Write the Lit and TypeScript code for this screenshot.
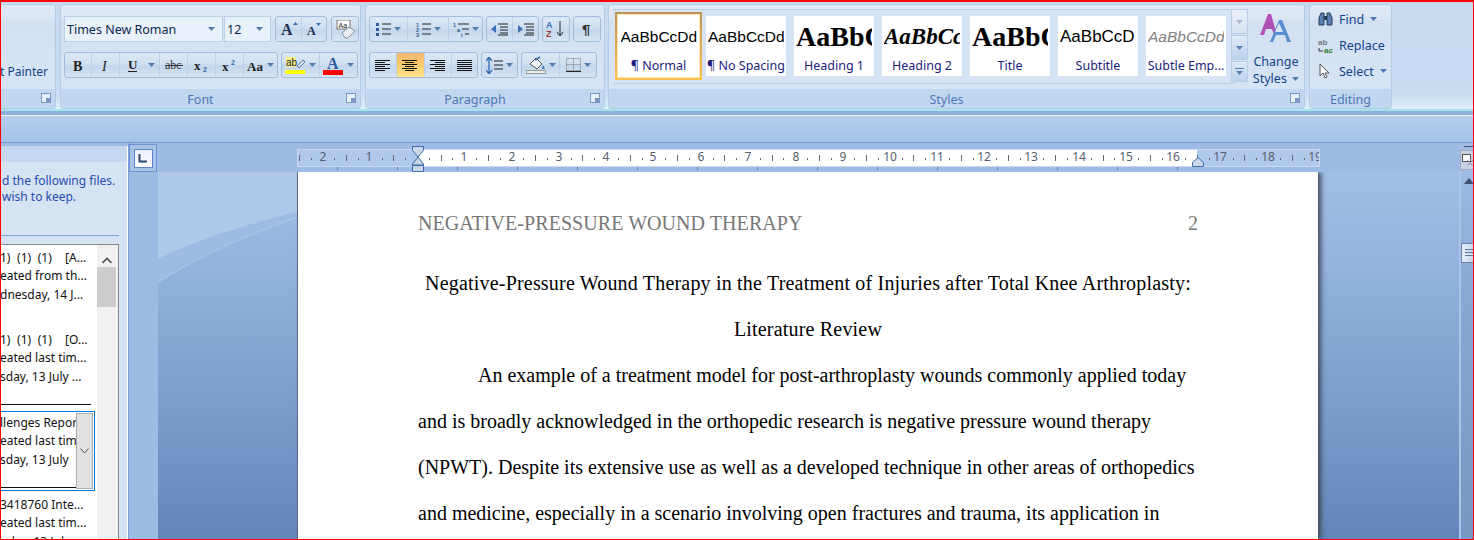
import { LitElement, html, css, svg } from "lit";
import { customElement } from "lit/decorators.js";

const arrow = (c = "#567db1") => html`<svg class="dd" width="7" height="4" viewBox="0 0 7 4"><path d="M0 0h7L3.5 4z" fill="${c}"/></svg>`;
const i = (w: number, h: number, body: unknown) => html`<svg width="${w}" height="${h}" viewBox="0 0 ${w} ${h}">${body}</svg>`;
const lines = (rows: [number, number][], c = "#111") => rows.map(([x, w], n) => svg`<rect x="${x}" y="${n * 2 + 1}" width="${w}" height="1" fill="${c}"/>`);

const rulerNums: [string, number][] = [["2", 323], ["1", 369], ["1", 464], ["2", 512], ["3", 559], ["4", 606], ["5", 653], ["6", 701], ["7", 748], ["8", 796], ["9", 843], ["10", 890], ["11", 937], ["12", 984], ["13", 1031], ["14", 1079], ["15", 1126], ["16", 1173], ["17", 1220], ["18", 1268], ["19", 1315]];

@customElement("app-root")
export class AppRoot extends LitElement {
  static styles = css`
    :host { display: block; width: 1474px; height: 540px; position: relative; overflow: hidden; background: #bfd4ee; font-family: "Noto Sans", sans-serif; color: #15428b; }
    .frame { position: absolute; inset: 0; border: solid #f00; border-width: 2px 1px 1px 1px; pointer-events: none; z-index: 9; }
    .ribbon { height: 111px; box-sizing: border-box; padding-top: 4px; display: flex; background: linear-gradient(#c9daf0 0, #c6d9f0 70%, #cbe0f3 90%, #e0f1fb 100%); border-bottom: 2px solid #a9e3ec; }
    .group { height: 105px; box-sizing: border-box; border: 1px solid #b5cbe6; border-radius: 3px; background: linear-gradient(#e0e9f5 0, #dae5f4 14%, #d2e0f2 15%, #d6e4f4 84%); display: flex; flex-direction: column; margin-right: 3px; flex: none; position: relative; }
    .body { height: 84px; box-sizing: border-box; position: relative; }
    .cap { height: 19px; background: #c1d7ef; display: flex; align-items: center; justify-content: center; font-size: 12.5px; color: #4f76b5; position: relative; border-radius: 0 0 3px 3px; box-sizing: border-box; padding: 2px 20px 0 0; }
    .cap.plain { padding-right: 0; }
    .launch { position: absolute; right: 4px; top: 4px; width: 8px; height: 8px; border: 1px solid #7a98c0; background: #e6eef8; }
    .launch::after { content: ""; position: absolute; right: 0; bottom: 0; width: 4px; height: 4px; background: #7a98c0; }
    .clip { width: 57px; margin-left: -1px; border-left: 0; }
    .painter { position: absolute; right: 7px; top: 58px; font-size: 12px; white-space: nowrap; }
    .font { width: 301px; margin-left: 1px; }
    .para { width: 240px; margin-left: 1px; }
    .styles { width: 697px; margin-left: 0; }
    .edit { width: 83px; margin-left: 1px; }
    .row { position: absolute; display: flex; gap: 3px; height: 26px; }
    .btns { display: flex; height: 100%; box-sizing: border-box; border: 1px solid #a3bddd; border-radius: 3px; background: linear-gradient(#dde8f5 0, #cfdff1 45%, #c3d6ec 55%, #d6e4f3 100%); }
    .btn { display: flex; align-items: center; justify-content: center; gap: 3px; border-right: 1px solid #bccfe7; box-sizing: border-box; }
    .btn:last-child { border-right: 0; }
    .btn.on { background: linear-gradient(#f8b877, #fbc766 40%, #fde28e); }
    .combo { height: 26px; box-sizing: border-box; background: #e8f0fa; border: 1px solid #bcd0e8; display: flex; align-items: center; justify-content: space-between; padding: 0 7px 0 2px; font-size: 12.5px; color: #10284f; }
    .row.r1 { top: 11px; } .row.r2 { top: 47px; }
    .gallery { position: absolute; left: 4px; top: 4px; width: 622px; height: 75px; background: #d5e3f4; border: 1px solid #b9cde6; border-left: 0; display: flex; gap: 8px; padding: 6px 0 0 5px; box-sizing: border-box; }
    .style { width: 80px; height: 60px; background: #fff; flex: none; display: flex; flex-direction: column; align-items: center; overflow: hidden; box-sizing: border-box; }
    .style.sel { width: 87px; height: 68px; margin: -4px -4px 0 -3px; border: 2px solid #f2b04f; border-image: linear-gradient(#c0935a, #fcc24e) 1; box-shadow: inset 0 0 0 1px #fbe7b4; }
    .sample { height: 36px; line-height: 36px; white-space: nowrap; width: 76px; overflow: hidden; text-align: center; color: #000; margin-top: 3px; flex: none; }
    .sel .sample { margin-top: 5px; }
    .label { font-size: 12.5px; color: #1c1c7c; white-space: nowrap; margin-top: 2px; }
    .sans { font: 15.5px/36px "Liberation Sans", sans-serif; }
    .h1 { font: bold 28px/36px "Liberation Serif", serif; text-align: left; }
    .h2 { font: italic bold 23px/36px "Liberation Serif", serif; text-align: left; }
    .scroll { position: absolute; left: 622px; top: 4px; width: 17px; display: flex; flex-direction: column; gap: 1px; }
    .scroll div { height: 24px; border: 1px solid #b9cde6; box-sizing: border-box; background: linear-gradient(#dfe9f6, #bcd2ee); display: flex; align-items: center; justify-content: center; }
    .scroll .up { background: linear-gradient(#e8eff8, #d8e3f1); }
    .change { position: absolute; left: 642px; top: 8px; width: 50px; text-align: center; font-size: 12.5px; line-height: 17px; }
    .change svg { display: block; margin: 0 auto 10px; }
    .change .dd { display: inline; margin: 0 0 2px 2px; }
    .edit-row { position: absolute; left: 8px; display: flex; align-items: center; gap: 6px; font-size: 12.5px; height: 20px; white-space: nowrap; }
    .band { height: 32px; box-sizing: border-box; border-bottom: 1px solid #7796c9; background: linear-gradient(#8fb0dc 0, #8fb0dc 4px, #edf4fc 4px, #edf4fc 5px, #b6cdec 5px, #a6c2e7); }
    .work { height: 397px; display: flex; position: relative; background: #9ebce4; }
    .pane { width: 128px; flex: none; background: #d5e3f3; border-right: 1px solid #fff; margin-top: 3px; position: relative; box-sizing: border-box; }
    .pane-head { height: 16px; background: #c4d7ef; }
    .note { position: absolute; left: 2px; top: 27px; font-size: 12px; line-height: 16px; color: #2a4cb0; white-space: nowrap; }
    .note span { display: block; }
    .rule { position: absolute; left: 0; top: 89px; width: 119px; height: 1px; background: #7ea4dd; }
    .list { position: absolute; left: 0; top: 98px; width: 119px; height: 296px; box-sizing: border-box; background: #fff; border: 1px solid #888; border-left: 0; border-bottom: 0; overflow: hidden; font-size: 12px; color: #111; }
    .entry { position: absolute; left: 0; width: 96px; height: 55px; line-height: 18.3px; white-space: pre; overflow: hidden; }
    .entry div { display: block; }
    .wide { word-spacing: 3.5px; }
    .sb { position: absolute; right: 0; top: 0; bottom: 0; width: 21px; background: #f0f0f0; }
    .thumb { position: absolute; top: 22px; left: 0; width: 19px; height: 40px; background: #cdcdcd; }
    .sep { position: absolute; left: 0; width: 91px; height: 1px; background: #111; }
    .focus { position: absolute; left: 0; top: 166px; width: 95px; height: 80px; box-sizing: border-box; border: 1px solid #0078d7; border-left: 0; overflow: hidden; }
    .focus .entry { top: 2px; width: 76px; }
    .focus .bar { position: absolute; right: 1px; top: 1px; bottom: 1px; width: 17px; background: #e1e1e1; border: 1px solid #adadad; box-sizing: border-box; display: flex; align-items: center; justify-content: center; }
    .focus .line { position: absolute; left: 0; bottom: 2px; width: 76px; height: 1px; background: #111; }
    .tabcol { width: 29px; flex: none; background: #9dbbe3; border-left: 1px solid #7d9fd4; position: relative; }
    .tab { position: absolute; left: 0; top: 1px; width: 28px; height: 28px; border: 1px solid #6d92d6; box-sizing: border-box; display: flex; align-items: center; justify-content: center; background: #a9c3e7; }
    .tab div { width: 19px; height: 19px; border: 1px solid #5e86d0; box-sizing: border-box; background: linear-gradient(#e8eefa, #fff); display: flex; align-items: center; justify-content: center; }
    .stage { flex: 1; min-width: 0; position: relative; background: linear-gradient(#a2bfe6 29px, #92b1dd 130px, #7c9dcd 260px, #6385b9 397px); overflow: hidden; }
    .rbar { height: 29px; background: #9dbbe3; position: relative; z-index: 2; }
    .ruler { position: absolute; left: 139px; top: 6px; width: 1023px; height: 18px; box-sizing: border-box; border: 1px solid #c7d8ef; background: #b0c9ea; overflow: hidden; font-size: 12px; color: #56606e; }
    .ruler .white { position: absolute; left: 120px; right: 122px; top: 0; bottom: 0; background: #fff; }
    .ruler span { position: absolute; top: -1px; transform: translateX(-50%); line-height: 16px; z-index: 1; }
    .marks { position: absolute; left: 0; top: 0; z-index: 1; }
    .tabstops { position: absolute; left: 0; top: 24px; }
    .ind { position: absolute; z-index: 3; }
    .swoosh { position: absolute; left: 0; top: 29px; }
    .page { position: absolute; left: 140px; top: 29px; width: 1020px; height: 368px; background: #fff; box-shadow: 3px 0 5px #3f4a5e, -1px 0 0 #5d6d88; font-family: "Liberation Serif", serif; color: #000; font-size: 20px; }
    .header { position: absolute; left: 120px; right: 120px; top: 40px; display: flex; justify-content: space-between; color: #777; line-height: 22px; letter-spacing: .06px; }
    .header b { font-weight: normal; }
    .text { position: absolute; left: 120px; top: 88px; width: 780px; }
    .ln { height: 46px; line-height: 46px; white-space: nowrap; }
    .ctr { text-align: center; letter-spacing: .19px; }
    .indent { padding-left: 60px; }
    .vs { width: 15px; flex: none; background: linear-gradient(#9dbbe3 29px, #8aa9d6 130px, #7796c4); position: relative; margin-left: -1px; border-left: 2px solid #a9c4e8; box-sizing: border-box; }
    .vs .dash { position: absolute; left: 3px; top: 3px; width: 10px; height: 1px; background: #3f4f72; }
    .vs .top { position: absolute; left: -1px; top: 7px; width: 15px; height: 20px; border: 1px solid #a3adbf; box-sizing: border-box; background: #c6d2e4; display: flex; align-items: center; justify-content: center; }
    .vs .up { position: absolute; left: 3px; top: 35px; width: 0; height: 0; border: 5px solid transparent; border-top: 0; border-bottom: 6px solid #3f4f72; }
    .vs .th { position: absolute; left: 0; top: 100px; width: 14px; height: 20px; border: 1px solid #6b82a8; box-sizing: border-box; background: linear-gradient(90deg, #e7eef8, #c3d4ea); }
    .vs .th::after { content: ""; position: absolute; left: 3px; top: 5px; width: 8px; height: 7px; background: repeating-linear-gradient(#61779b 0 1px, transparent 1px 3px); }
  `;

  private fontGroup() {
    return html`<div class="group font"><div class="body">
      <div class="row r1" style="left:3px;gap:1px">
        <div class="combo" style="width:159px">Times New Roman ${arrow()}</div>
        <div class="combo" style="width:47px">12 ${arrow()}</div>
        <div class="btns" style="margin-left:3px;width:52px">
          <div class="btn" style="width:27px">${i(18, 14, svg`<text x="1" y="13" font-family="Liberation Serif" font-weight="bold" font-size="16" fill="#1f2f4f">A</text><path d="M13 3h5l-2.5-3z" fill="#3a6bb0"/>`)}</div>
          <div class="btn" style="width:24px">${i(16, 14, svg`<text x="1" y="13" font-family="Liberation Serif" font-weight="bold" font-size="12" fill="#1f2f4f">A</text><path d="M10 1h5l-2.5 3z" fill="#3a6bb0"/>`)}</div>
        </div>
        <div class="btns" style="margin-left:3px;width:28px"><div class="btn" style="width:26px">${i(21, 19, svg`<rect x="2" y="0" width="13" height="9" fill="#fff" stroke="#777"/><text x="3.5" y="7.5" font-size="7" font-family="Liberation Sans" fill="#222">Aa</text><path d="M7 13l7-6 6 4-7 7h-3z" fill="#e9edf3" stroke="#8a8f99"/>`)}</div></div>
      </div>
      <div class="row r2" style="left:3px;gap:3px">
        <div class="btns" style="width:214px">
          <div class="btn" style="width:27px">${i(12, 13, svg`<text x="1" y="12" font-family="Liberation Serif" font-weight="bold" font-size="14" fill="#222">B</text>`)}</div>
          <div class="btn" style="width:28px">${i(12, 13, svg`<text x="2" y="12" font-family="Liberation Serif" font-style="italic" font-size="14" fill="#222">I</text>`)}</div>
          <div class="btn" style="width:40px;padding-left:3px">${i(12, 15, svg`<text x="1" y="11" font-family="Liberation Serif" font-weight="bold" font-size="13" fill="#222">U</text><rect x="1" y="13" width="9" height="1" fill="#222"/>`)}<span style="width:3px"></span>${arrow()}</div>
          <div class="btn" style="width:28px">${i(18, 12, svg`<text x="0" y="10" font-family="Liberation Serif" font-size="12" fill="#333">abc</text><rect x="0" y="6" width="18" height="1" fill="#333"/>`)}</div>
          <div class="btn" style="width:28px">${i(15, 13, svg`<text x="0" y="11" font-family="Liberation Serif" font-weight="bold" font-size="13" fill="#222">x</text><text x="9" y="13" font-family="Liberation Sans" font-weight="bold" font-size="7" fill="#3a6bb0">2</text>`)}</div>
          <div class="btn" style="width:28px">${i(15, 13, svg`<text x="0" y="12" font-family="Liberation Serif" font-weight="bold" font-size="13" fill="#222">x</text><text x="9" y="6" font-family="Liberation Sans" font-weight="bold" font-size="7" fill="#3a6bb0">2</text>`)}</div>
          <div class="btn" style="width:33px">${i(17, 13, svg`<text x="0" y="12" font-family="Liberation Serif" font-weight="bold" font-size="13" fill="#222">Aa</text>`)}${arrow()}</div>
        </div>
        <div class="btns" style="width:77px">
          <div class="btn" style="width:38px">${i(21, 18, svg`<rect x="1" y="1" width="10" height="10" fill="#f7f08b"/><text x="1" y="10" font-family="Liberation Sans" font-size="10" fill="#222">ab</text><path d="M12 10l6-6 2 2-6 6z" fill="none" stroke="#6a7f9c"/><rect x="0" y="14" width="20" height="4" fill="#ff0"/>`)}${arrow()}</div>
          <div class="btn" style="width:37px">${i(21, 19, svg`<text x="4" y="13" font-family="Liberation Serif" font-weight="bold" font-size="16" fill="#2e5aa0">A</text><rect x="0" y="14" width="20" height="5" fill="#f00"/>`)}${arrow()}</div>
        </div>
      </div>
    </div><div class="cap">Font<i class="launch"></i></div></div>`;
  }

  private paraGroup() {
    const align = (rows: [number, number][]) => i(16, 12, lines(rows));
    const dots = svg`<rect x="0" y="1" width="3" height="3" fill="#345b95"/><rect x="0" y="6" width="3" height="3" fill="#345b95"/><rect x="0" y="11" width="3" height="3" fill="#345b95"/><path d="M6 2h9M6 7h9M6 12h9" stroke="#222"/>`;
    const nums = svg`<text font-size="5.5" font-family="Liberation Sans" font-weight="bold" fill="#345b95"><tspan x="0" y="5">1</tspan><tspan x="0" y="10">2</tspan><tspan x="0" y="15">3</tspan></text><path d="M6 2h9M6 7h9M6 12h9" stroke="#222"/>`;
    const multi = svg`<text font-size="5.5" font-family="Liberation Sans" font-weight="bold" fill="#345b95"><tspan x="0" y="5">1</tspan><tspan x="4" y="10">a</tspan><tspan x="8" y="15">i</tspan></text><path d="M5 2h11M9 7h7M12 12h4" stroke="#222"/>`;
    return html`<div class="group para"><div class="body">
      <div class="row r1" style="left:3px">
        <div class="btns" style="width:114px">
          <div class="btn" style="width:38px">${i(15, 15, dots)}${arrow()}</div>
          <div class="btn" style="width:41px">${i(15, 15, nums)}${arrow()}</div>
          <div class="btn" style="width:33px">${i(16, 15, multi)}${arrow()}</div>
        </div>
        <div class="btns" style="width:53px">
          <div class="btn" style="width:26px">${i(18, 13, svg`<path d="M0 6l5-4v8z" fill="#3d6fb5"/><path d="M7 1h10M9 4h8M9 7h8M9 10h8M7 12h10" stroke="#222"/>`)}</div>
          <div class="btn" style="width:25px">${i(18, 13, svg`<path d="M6 6l-5-4v8z" fill="#3d6fb5"/><path d="M7 1h10M9 4h8M9 7h8M9 10h8M7 12h10" stroke="#222"/>`)}</div>
        </div>
        <div class="btns" style="width:28px"><div class="btn" style="width:26px">${i(20, 18, svg`<text font-size="9" font-family="Liberation Sans" font-weight="bold"><tspan x="0" y="8" fill="#3d6fb5">A</tspan><tspan x="0" y="17" fill="#9c3a3a">Z</tspan></text><path d="M14 1v14M11 12l3 4 3-4" fill="none" stroke="#222"/>`)}</div></div>
        <div class="btns" style="width:28px"><div class="btn" style="width:26px">${i(12, 14, svg`<text x="1" y="13" font-size="15" font-family="Liberation Sans" font-weight="bold" fill="#333">¶</text>`)}</div></div>
      </div>
      <div class="row r2" style="left:3px">
        <div class="btns" style="width:109px">
          <div class="btn" style="width:27px">${align([[0, 15], [0, 10], [0, 15], [0, 10], [0, 15], [0, 10]])}</div>
          <div class="btn on" style="width:28px">${align([[0, 15], [3, 9], [0, 15], [3, 9], [0, 15], [3, 9]])}</div>
          <div class="btn" style="width:28px">${align([[0, 15], [5, 10], [0, 15], [5, 10], [0, 15], [5, 10]])}</div>
          <div class="btn" style="width:25px">${align([[0, 15], [0, 15], [0, 15], [0, 15], [0, 15], [0, 15]])}</div>
        </div>
        <div class="btns" style="width:37px"><div class="btn" style="width:35px">${i(17, 17, svg`<path d="M3 1v15M0 4l3-4 3 4M0 13l3 4 3-4" fill="none" stroke="#3d6fb5" stroke-width="1.4"/><path d="M8 4h9M8 8h9M8 12h9" stroke="#222"/>`)}${arrow()}</div></div>
        <div class="btns" style="width:76px">
          <div class="btn" style="width:38px">${i(20, 18, svg`<path d="M4 8l6-6 6 6-5 5z" fill="#eef1f6" stroke="#555"/><path d="M9 4l5-3" stroke="#3d6fb5" stroke-width="1.5"/><path d="M17 9l2 4h-3z" fill="#3d6fb5"/><rect x="0.5" y="14.5" width="19" height="3" fill="#eee" stroke="#999"/>`)}${arrow()}</div>
          <div class="btn" style="width:36px">${i(15, 15, svg`<path d="M.5 .5h14v12H.5zM7.5 .5v12M.5 6.5h14" fill="none" stroke="#777" stroke-dasharray="1 1"/><rect x="0" y="13" width="15" height="1" fill="#222"/>`)}${arrow()}</div>
        </div>
      </div>
    </div><div class="cap">Paragraph<i class="launch"></i></div></div>`;
  }

  private stylesGroup() {
    const items: [string, string, string, string][] = [
      ["AaBbCcDd", "¶ Normal", "sans", ""],
      ["AaBbCcDd", "¶ No Spacing", "sans", ""],
      ["AaBbC(", "Heading 1", "h1", ""],
      ["AaBbCc", "Heading 2", "h2", ""],
      ["AaBbC(", "Title", "h1", ""],
      ["AaBbCcD", "Subtitle", "sans", "font-size:17px;text-align:left"],
      ["AaBbCcDd", "Subtle Emp...", "sans", "font-style:italic;color:#808080"],
    ];
    return html`<div class="group styles"><div class="body">
      <div class="gallery">
        ${items.map(([s, l, c, st], n) => html`<div class="style ${n === 0 ? "sel" : ""}"><div class="sample ${c}" style="${st}">${s}</div><div class="label">${l}</div></div>`)}
      </div>
      <div class="scroll">
        <div class="up" style="height:25px">${arrow("#a9b8cc")}</div>
        <div style="height:25px">${arrow()}</div>
        <div style="height:21px">${i(9, 7, svg`<rect width="9" height="1" fill="#567db1"/><path d="M1 3h7L4.5 7z" fill="#567db1"/>`)}</div>
      </div>
      <div class="change">
        ${i(32, 30, svg`<path d="M0 22L8 1h3l6 21h-3l-2-6H6l-2 6z" fill="#b04fb5"/><path d="M10 29L19 7h3l9 22h-4l-2-7h-9l-3 7z" fill="#5b8ed0"/><path d="M15 19h8l-4-9z" fill="#dbe6f4"/>`)}
        Change<br />Styles ${arrow()}
      </div>
    </div><div class="cap">Styles<i class="launch"></i></div></div>`;
  }

  private editGroup() {
    return html`<div class="group edit"><div class="body">
      <div class="edit-row" style="top:4px">${i(15, 14, svg`<path d="M1 13V6l2-5h3v12zM9 13V1h3l2 5v7z" fill="#5a7fb0" stroke="#263c5e"/><rect x="6" y="4" width="3" height="4" fill="#263c5e"/>`)}Find ${arrow("#4f76b5")}</div>
      <div class="edit-row" style="top:30px">${i(15, 15, svg`<text font-size="8" font-family="Liberation Sans" font-weight="bold"><tspan x="0" y="7" fill="#777">ab</tspan><tspan x="6" y="15" fill="#2f7d2f">ac</tspan></text><path d="M1 10v3h4" fill="none" stroke="#333"/>`)}Replace</div>
      <div class="edit-row" style="top:56px">${i(15, 16, svg`<path d="M2 1v12l3-3 2 5 2-1-2-4h4z" fill="#f4f6fa" stroke="#555"/>`)}Select ${arrow("#4f76b5")}</div>
    </div><div class="cap plain">Editing</div></div>`;
  }

  private ruler() {
    const origin = 119;
    const ticks: unknown[] = [];
    for (let n = -12; n <= 76; n++) {
      const x = Math.round(origin + n * 11.82);
      const k = ((n % 4) + 4) % 4;
      if (k === 2) ticks.push(svg`<rect x="${x}" y="5" width="1" height="6" fill="#667"/>`);
      else if (k !== 0) ticks.push(svg`<rect x="${x}" y="8" width="1" height="2" fill="#667"/>`);
    }
    const stops: unknown[] = [];
    for (let x = 179; x < 1040; x += 60) stops.push(svg`<rect x="${x}" y="0" width="1" height="3" fill="#6f86a8"/>`);
    return html`<div class="ruler"><div class="white"></div>
      <svg class="marks" width="1026" height="16">${ticks}</svg>
      ${rulerNums.map(([t, x]) => html`<span style="left:${x - 298}px">${t}</span>`)}
    </div>
    <svg class="tabstops" width="1100" height="4">${stops}</svg>
    <svg class="ind" style="left:254px;top:3px" width="12" height="26" viewBox="0 0 12 26">
      <path d="M.5 .5h11v4L6 11 .5 4.5zM6 11l5.5 7v1H.5v-1zM.5 19.5h11v6H.5z" fill="#c9d6e8" stroke="#3f6aa8"/>
    </svg>
    <svg class="ind" style="left:1034px;top:14px" width="12" height="10" viewBox="0 0 12 10">
      <path d="M.5 9.5v-4L6 .5l5.5 5v4z" fill="#c9d6e8" stroke="#3f6aa8"/>
    </svg>`;
  }

  private pane() {
    const e = (top: number, a: string, b: string, c: string) => html`<div class="entry" style="top:${top}px"><div class="wide">${a}</div><div>${b}</div><div>${c}</div></div>`;
    return html`<div class="pane">
      <div class="pane-head"></div>
      <div class="note"><span>d the following files.</span><span>wish to keep.</span></div>
      <div class="rule"></div>
      <div class="list">
        ${e(4, "1) (1) (1)  [A...", "eated from th...", "dnesday, 14 J...")}
        ${e(86, "1) (1) (1)  [O...", "eated last tim...", "sday, 13 July ...")}
        <div class="sep" style="top:159px"></div>
        <div class="focus">
          <div class="entry"><div>llenges Repor</div><div>eated last tim</div><div>sday, 13 July</div></div>
          <div class="line"></div>
          <div class="bar">${i(9, 6, svg`<path d="M.5 .5L4.5 5 8.5 .5" fill="none" stroke="#555"/>`)}</div>
        </div>
        <div class="entry" style="top:251px"><div>3418760 Inte...</div><div>eated last tim...</div><div>nday, 13 July</div></div>
        <div class="sb">
          <div style="padding:6px 0 0 5px">${i(10, 7, svg`<path d="M.5 6L5 1.5 9.5 6" fill="none" stroke="#555" stroke-width="1.6"/>`)}</div>
          <div class="thumb"></div>
        </div>
      </div>
    </div>`;
  }

  render() {
    return html`
      <div class="frame"></div>
      <div class="ribbon">
        <div class="group clip"><div class="body"><div class="painter">t Painter</div></div><div class="cap"><i class="launch"></i></div></div>
        ${this.fontGroup()}${this.paraGroup()}${this.stylesGroup()}${this.editGroup()}
      </div>
      <div class="band"></div>
      <div class="work">
        ${this.pane()}
        <div class="tabcol"><div class="tab"><div>${i(10, 9, svg`<path d="M1.5 0v7.5H9" fill="none" stroke="#2d4470" stroke-width="2"/>`)}</div></div></div>
        <div class="stage">
          <div class="rbar">${this.ruler()}</div>
          <svg class="swoosh" width="140" height="200" viewBox="0 0 140 200">
            <path d="M0 0h140v40C90 52 40 68 0 87z" fill="#afc8ea"/>
            <path d="M0 87C40 68 90 52 140 40v5C90 62 40 85 0 110z" fill="#9fbbe3"/>
            <path d="M0 110C40 85 90 62 140 45" fill="none" stroke="#a9c3e8" stroke-width="1.5"/>
          </svg>
          <div class="page">
            <div class="header"><span>NEGATIVE-PRESSURE WOUND THERAPY</span><b>2</b></div>
            <div class="text">
              <div class="ln ctr">Negative-Pressure Wound Therapy in the Treatment of Injuries after Total Knee Arthroplasty:</div>
              <div class="ln ctr">Literature Review</div>
              <div class="ln indent">An example of a treatment model for post-arthroplasty wounds commonly applied today</div>
              <div class="ln">and is broadly acknowledged in the orthopedic research is negative pressure wound therapy</div>
              <div class="ln">(NPWT). Despite its extensive use as well as a developed technique in other areas of orthopedics</div>
              <div class="ln">and medicine, especially in a scenario involving open fractures and trauma, its application in</div>
            </div>
          </div>
        </div>
        <div class="vs"><div class="dash"></div>
          <div class="top">${i(12, 12, svg`<rect x="0.5" y="0.5" width="8" height="7" fill="#fff" stroke="#555"/><path d="M5 6l6 6M11 6l-6 6" stroke="#667" stroke-dasharray="1 1"/>`)}</div>
          <div class="up"></div><div class="th"></div></div>
      </div>
    `;
  }
}
